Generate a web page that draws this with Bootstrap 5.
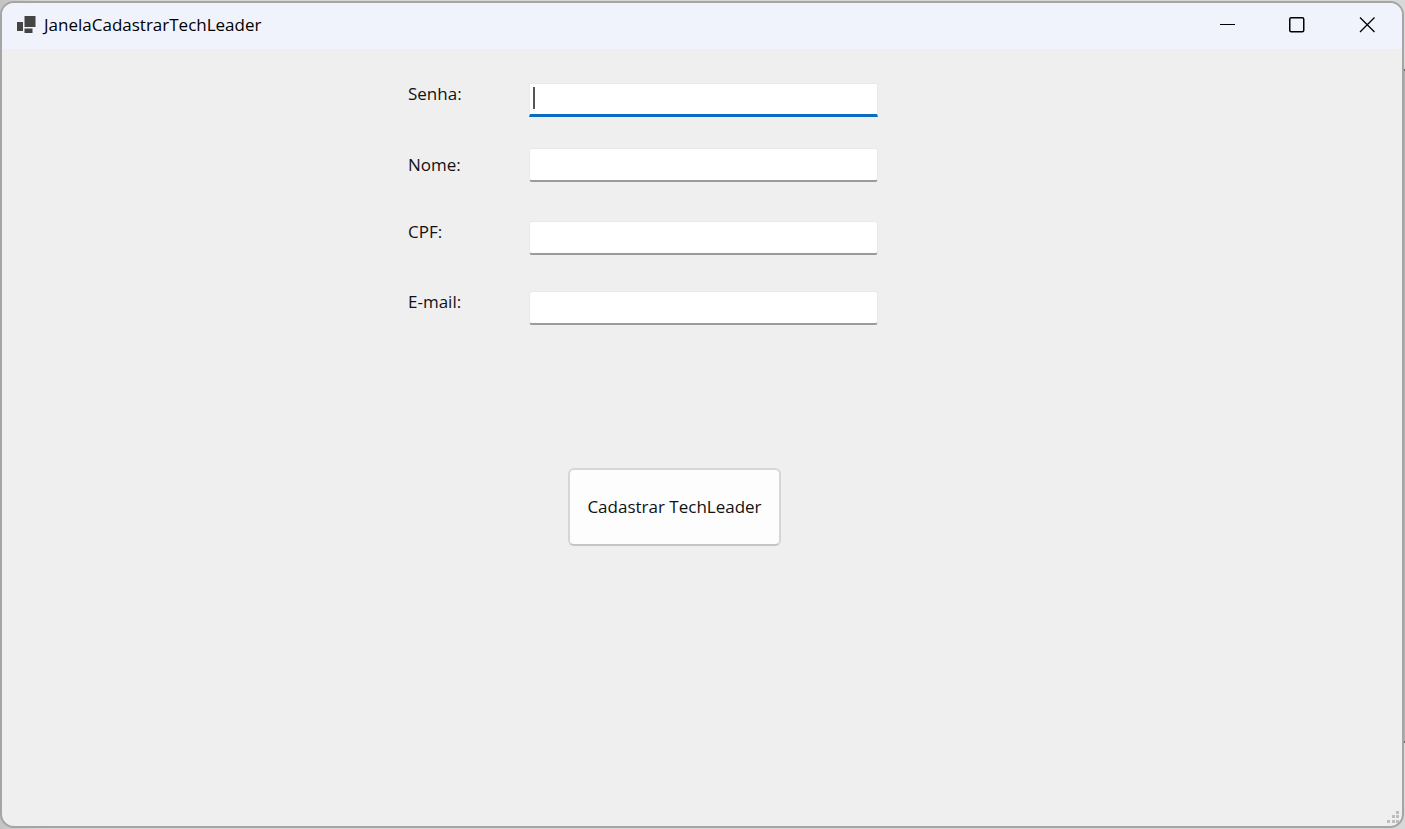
<!DOCTYPE html>
<html lang="pt-BR">
<head>
<meta charset="utf-8">
<meta name="viewport" content="width=device-width, initial-scale=1">
<title>JanelaCadastrarTechLeader</title>
<link href="https://cdn.jsdelivr.net/npm/bootstrap@5.3.0/dist/css/bootstrap.min.css" rel="stylesheet">
<style>
  body { background: linear-gradient(#666 2px, #b0b0b0 2px, #b0b0b0 calc(100% - 2px), #666 calc(100% - 2px)) right 69px / 3px calc(100% - 155px) no-repeat, linear-gradient(to right, #c4c4c4, #d8d8d8 3%, #d8d8d8); font-family: "Open Sans", "Noto Sans", sans-serif; font-size: 17px; line-height: 24px; color: #111; padding: 1px 1px 1px 0; }
  .app-window { background: #efefef; border: 2px solid #a5a5a5; border-radius: 14px; overflow: hidden; }
  .title-bar { background: #f0f3fb; height: 46px; padding: 0 0 2px 15px; }
  .window-title { color: #000; }
  .caption-btn { width: 70px; height: 44px; border: 0; background: transparent; padding: 0; }
  .caption-btn svg, .app-icon { display: block; }
  .entry-form { width: 470px; margin-left: 29%; padding-top: 34px; }
  .entry-label { width: 121px; line-height: 22px; }
  .entry-box { width: 349px; height: 34px; border: 1px solid #e9e9e9; border-bottom: 2px solid #9b9b9b; border-radius: 3px; background: #fff; padding: 2px 4px; outline: 0; }
  .entry-box.is-current { border-bottom: 3px solid #0a6cc4; border-radius: 0; background: linear-gradient(#555, #555) 3px 3px / 2px 22px no-repeat #fff; caret-color: transparent; }
  .gap-s { margin-bottom: 31px; }
  .gap-m { margin-bottom: 36px; }
  .gap-l { margin-bottom: 39px; }
  .submit-btn { width: 213px; height: 78px; margin: 143px 0 0 160px; background: #fdfdfd; border: 2px solid #d6d6d6; border-bottom-color: #c4c4c4; border-radius: 6px; color: #111; padding: 0; }
</style>
</head>
<body class="min-vh-100 d-flex">
<main class="app-window flex-grow-1 d-flex flex-column">
  <header class="title-bar d-flex align-items-center">
    <svg class="app-icon me-2" width="19" height="18" viewBox="0 0 19 18" fill="#444" aria-hidden="true">
      <rect x="0" y="6" width="6" height="9"/><rect x="7.500" y="0" width="11" height="11"/><rect x="7.500" y="12.500" width="8" height="4.500"/>
    </svg>
    <span class="window-title">JanelaCadastrarTechLeader</span>
    <div class="d-flex ms-auto">
      <button type="button" class="caption-btn d-flex align-items-center justify-content-center" aria-label="Minimizar"><svg width="16" height="16"><path d="M1 7.5h15" stroke="#000"/></svg></button>
      <button type="button" class="caption-btn d-flex align-items-center justify-content-center" aria-label="Maximizar"><svg width="16" height="16"><rect x=".75" y=".75" width="14" height="14" rx="1.5" fill="none" stroke="#000" stroke-width="1.5"/></svg></button>
      <button type="button" class="caption-btn d-flex align-items-center justify-content-center" aria-label="Fechar"><svg width="16" height="16"><path d="M1 .5l14.500 14.500M15.500 .5L1 15" stroke="#000" stroke-width="1.300"/></svg></button>
    </div>
  </header>
  <form class="entry-form">
    <div class="d-flex align-items-start gap-s"><label class="entry-label" for="senha">Senha:</label><input class="entry-box is-current" id="senha" type="password"></div>
    <div class="d-flex align-items-center gap-l"><label class="entry-label" for="nome">Nome:</label><input class="entry-box" id="nome" type="text"></div>
    <div class="d-flex align-items-start gap-m"><label class="entry-label" for="cpf">CPF:</label><input class="entry-box" id="cpf" type="text"></div>
    <div class="d-flex align-items-start"><label class="entry-label" for="email">E-mail:</label><input class="entry-box" id="email" type="email"></div>
    <button type="button" class="submit-btn">Cadastrar TechLeader</button>
  </form>
  <svg class="mt-auto ms-auto d-block" width="15" height="15" fill="#bdbdbd" aria-hidden="true">
    <path d="M9 0h3v3H9zM5 4h3v3H5zM9 4h3v3H9zM0 9h3v3H0zM5 9h3v3H5zM9 9h3v3H9z"/>
  </svg>
</main>
<script src="https://cdn.jsdelivr.net/npm/bootstrap@5.3.0/dist/js/bootstrap.bundle.min.js"></script>
</body>
</html>
